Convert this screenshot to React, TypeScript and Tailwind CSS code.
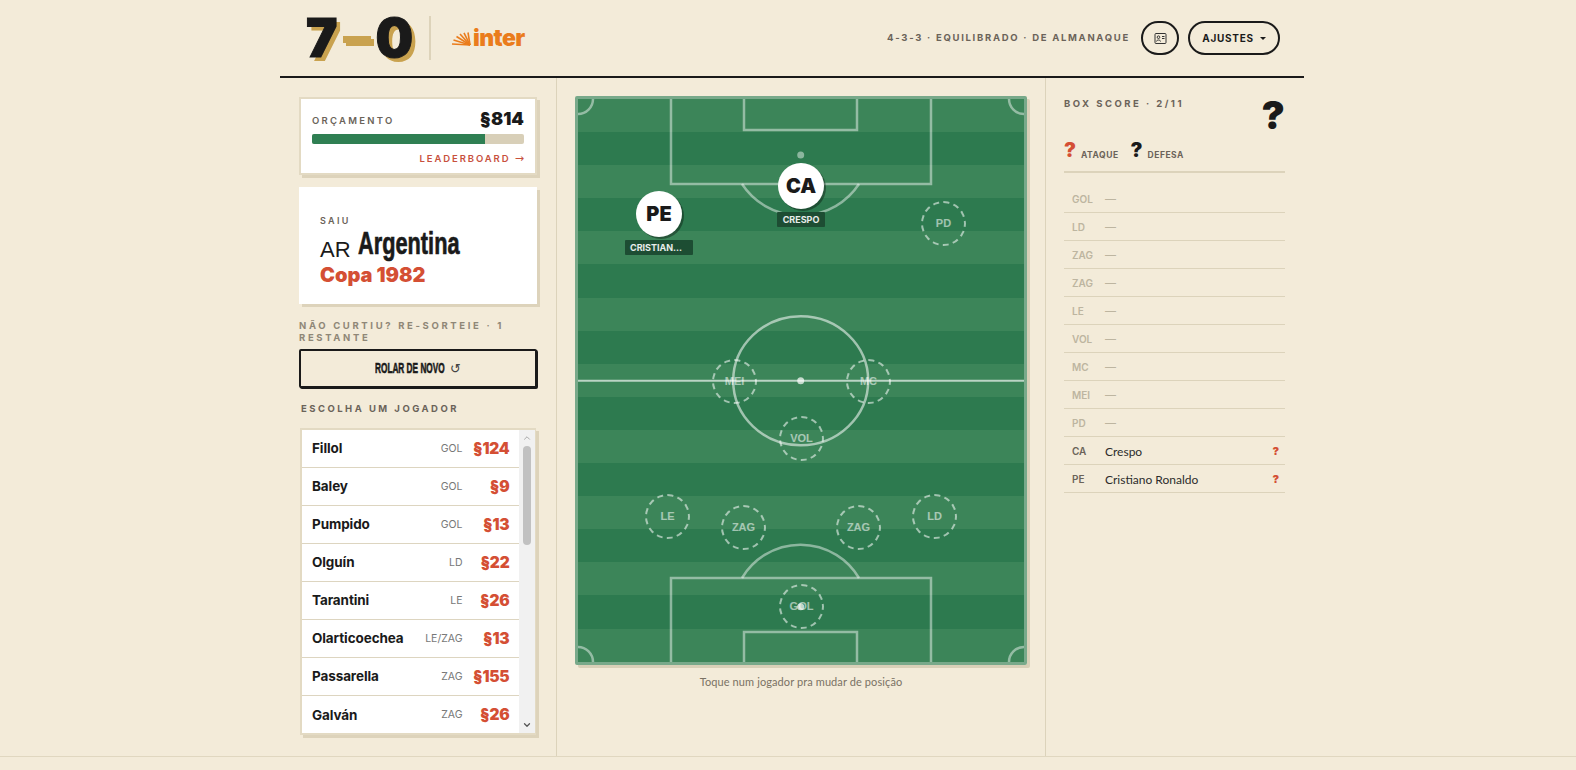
import { ChevronDown, ChevronUp } from "lucide-react";

const players = [
  { name: "Fillol", pos: "GOL", price: "§124" },
  { name: "Baley", pos: "GOL", price: "§9" },
  { name: "Pumpido", pos: "GOL", price: "§13" },
  { name: "Olguín", pos: "LD", price: "§22" },
  { name: "Tarantini", pos: "LE", price: "§26" },
  { name: "Olarticoechea", pos: "LE/ZAG", price: "§13" },
  { name: "Passarella", pos: "ZAG", price: "§155" },
  { name: "Galván", pos: "ZAG", price: "§26" },
];

const boxScore = [
  { pos: "GOL" },
  { pos: "LD" },
  { pos: "ZAG" },
  { pos: "ZAG" },
  { pos: "LE" },
  { pos: "VOL" },
  { pos: "MC" },
  { pos: "MEI" },
  { pos: "PD" },
  { pos: "CA", name: "Crespo" },
  { pos: "PE", name: "Cristiano Ronaldo" },
];

// spot positions in px from the pitch's inner corner
const emptySlots = [
  { pos: "PD", x: 365, y: 124 },
  { pos: "MEI", x: 156, y: 282 },
  { pos: "MC", x: 290, y: 282 },
  { pos: "VOL", x: 223, y: 339 },
  { pos: "LE", x: 89, y: 417 },
  { pos: "ZAG", x: 165, y: 428 },
  { pos: "ZAG", x: 280, y: 428 },
  { pos: "LD", x: 356, y: 417 },
  { pos: "GOL", x: 223, y: 507 },
];

const placed = [
  { pos: "CA", label: "CRESPO", x: 223, y: 87, labelW: "w-[48px]", justify: "justify-center" },
  { pos: "PE", label: "CRISTIAN...", x: 81, y: 115, labelW: "w-[68px]", justify: "justify-start pl-[5px]" },
];

const sunRays = [
  "M19 13L1 12",
  "M19 13L2.5 8",
  "M19 13L5.5 4.5",
  "M19 13L9 2",
  "M19 13L13 .8",
  "M19 13L17 .5",
];

function PitchLines() {
  const line = { stroke: "rgba(255,255,255,0.45)", strokeWidth: 2.5, fill: "none" };
  return (
    <svg viewBox="0 0 446 563" className="absolute inset-0 w-full h-full">
      <path d="M93 0V85H353V0" {...line} />
      <path d="M166 0V31H279V0" {...line} />
      <path d="M164 85A70 70 0 0 0 281 85" {...line} />
      <circle cx="222.7" cy="56" r="3.5" fill="rgba(255,255,255,0.45)" />
      <line x1="0" y1="281.7" x2="446" y2="281.7" stroke="rgba(255,255,255,0.65)" strokeWidth="2" />
      <ellipse cx="222.7" cy="281.7" rx="67.5" ry="64.5" {...line} stroke="rgba(255,255,255,0.55)" />
      <circle cx="222.7" cy="281.7" r="3.5" fill="rgba(255,255,255,0.7)" />
      <path d="M93 563V479H353V563" {...line} />
      <path d="M166 563V533H279V563" {...line} />
      <path d="M164 479A68 68 0 0 1 281 479" {...line} />
      <circle cx="222.7" cy="507.7" r="3.5" fill="rgba(255,255,255,0.7)" />
      <path d="M0 15A15 15 0 0 0 15 0" {...line} />
      <path d="M431 0A15 15 0 0 0 446 15" {...line} />
      <path d="M0 548A15 15 0 0 1 15 563" {...line} />
      <path d="M431 563A15 15 0 0 1 446 548" {...line} />
    </svg>
  );
}

function Pitch() {
  return (
    <div className="relative w-[452px] h-[569px] border-[3px] border-[#78a98a] rounded-[2px] shadow-[3px_3px_0_#d9d0b8] bg-[repeating-linear-gradient(180deg,#3c8559_0,#3c8559_33.1px,#2d7a4f_33.1px,#2d7a4f_66.2px)]">
      <PitchLines />
      {emptySlots.map((s) => (
        <div
          key={s.pos + s.x}
          className="absolute w-[45px] h-[45px] -ml-[22px] -mt-[22px] rounded-full border-[2.5px] border-dashed border-white/55 flex items-center justify-center text-[11px] font-bold text-white/55 font-['Liberation_Sans',sans-serif]"
          style={{ left: s.x, top: s.y }}
        >
          {s.pos}
        </div>
      ))}
      {placed.map((p) => (
        <div key={p.pos} className="absolute w-0 h-0" style={{ left: p.x, top: p.y }}>
          <div className="absolute -left-[23px] -top-[23px] w-[46px] h-[46px] rounded-full bg-white shadow-[2px_2px_0_rgba(0,0,0,0.35)] flex items-center justify-center text-[20px] font-black text-[#1a1a1a] font-['Inter',sans-serif]">
            {p.pos}
          </div>
          <div
            className={`absolute left-0 top-[26px] h-[15px] -translate-x-1/2 flex items-center bg-[#1d4d33] rounded-[1px] text-[9px] font-bold text-white/90 font-['Inter',sans-serif] whitespace-nowrap ${p.labelW} ${p.justify}`}
          >
            {p.label}
          </div>
        </div>
      ))}
    </div>
  );
}

function Header() {
  return (
    <header className="h-[78px] border-b-2 border-[#1a1a1a] pl-[26px] pr-[24px] flex items-center justify-between">
      <div className="flex items-center">
        <div className="flex items-center h-[44px] w-[124px] text-[53px] leading-none font-black text-[#1a1a1a] font-['Inter',sans-serif] [-webkit-text-stroke:1px_#1a1a1a] [text-shadow:4px_4px_0_#c9a24f]">
          <span>7</span>
          <span className="mx-[5px] mt-[3px] w-[28px] h-[7px] bg-[#c9a24f] shadow-[3px_3px_0_#c9a24f]" />
          <span>0</span>
        </div>
        <div className="ml-[-1px] w-[2px] h-[44px] bg-[#ddd3ba]" />
        <div className="ml-[20px] flex items-center gap-[2px]">
          <svg viewBox="0 0 20 14" className="w-[20px] h-[14px] mt-[1px]" stroke="#ea7c1c" strokeWidth="1.6" fill="none">
            {sunRays.map((d) => (
              <path key={d} d={d} />
            ))}
          </svg>
          <span className="text-[23px] leading-none font-black tracking-[-0.6px] text-[#ea7c1c] font-['Inter',sans-serif]">
            inter
          </span>
        </div>
      </div>
      <div className="flex items-center">
        <span className="text-[9.5px] font-bold tracking-[0.18em] text-[#6b6359] font-['Inter',sans-serif] whitespace-nowrap">
          4-3-3 · EQUILIBRADO · DE ALMANAQUE
        </span>
        <button className="ml-[11px] w-[38px] h-[34px] rounded-full border-2 border-[#1a1a1a] flex items-center justify-center">
          <svg viewBox="0 0 13 11" className="w-[13px] h-[11px]" fill="none" stroke="#333" strokeWidth="1">
            <rect x="1" y=".5" width="11" height="10" rx="1" />
            <circle cx="4.5" cy="4.2" r="1.3" />
            <path d="M2.5 8.5c0-2 4-2 4 0" />
            <path d="M8 3.5h2.5M8 5.5h2.5" />
          </svg>
        </button>
        <button className="ml-[9px] w-[92px] h-[34px] rounded-full border-2 border-[#1a1a1a] flex items-center justify-center gap-[6px] text-[10px] font-bold tracking-[0.7px] text-[#1a1a1a] font-['Inter',sans-serif]">
          AJUSTES
          <span className="w-0 h-0 border-x-[3px] border-x-transparent border-t-[3px] border-t-[#1a1a1a]" />
        </button>
      </div>
    </header>
  );
}

function LeftColumn() {
  return (
    <aside className="border-r border-[#dcd3bb] px-[19px] pt-[19px] font-['Inter',sans-serif]">
      <div className="h-[78px] border-2 border-[#e3dac3] bg-white shadow-[3px_3px_0_#ddd3bb] px-[11px] pt-[10px]">
        <div className="flex items-center justify-between h-[20px]">
          <span className="mt-[4px] text-[9.5px] font-semibold tracking-[0.24em] text-[#6b6359]">ORÇAMENTO</span>
          <span className="text-[18px] leading-none font-black text-[#1a1a1a]">§814</span>
        </div>
        <div className="mt-[5px] h-[10px] rounded-[2px] bg-[#d8cfb8]">
          <div className="h-full w-[81.5%] rounded-l-[2px] bg-[#2f7f53]" />
        </div>
        <div className="mt-[8px] text-right text-[9.5px] leading-[14px] font-semibold tracking-[0.2em] text-[#c8503c]">
          LEADERBOARD <span className="text-[11px] font-normal font-['DejaVu_Sans',sans-serif] tracking-normal">→</span>
        </div>
      </div>

      <div className="mt-[12px] h-[117px] bg-white shadow-[3px_3px_0_#ddd3bb] px-[21px] pt-[28px]">
        <div className="text-[9px] leading-[12px] font-semibold tracking-[0.26em] text-[#6b6359]">SAIU</div>
        <div className="mt-[2px] flex items-baseline h-[34px]">
          <span className="text-[22px] leading-[34px] text-[#1a1a1a] font-['Liberation_Sans',sans-serif]">AR</span>
          <span className="ml-[7px] inline-block origin-left -translate-y-[3px] scale-x-[0.68] text-[32px] leading-[34px] font-bold text-[#1a1a1a] font-['Liberation_Sans',sans-serif] [-webkit-text-stroke:0.7px_#1a1a1a]">
            Argentina
          </span>
        </div>
        <div className="text-[20px] leading-[24px] font-black text-[#d44f34]">Copa 1982</div>
      </div>

      <p className="mt-[16px] text-[9.5px] leading-[12px] font-bold tracking-[0.28em] text-[#8f8777]">
        NÃO CURTIU? RE-SORTEIE · 1 RESTANTE
      </p>
      <button className="mt-[5px] w-full h-[39px] rounded-[2px] border-2 border-[#1a1a1a] bg-[#f3ebd9] shadow-[1px_1px_0_#1a1a1a] flex items-center justify-center text-[#1a1a1a]">
        <span className="w-[71px] whitespace-nowrap inline-block text-left origin-left scale-x-[0.55] text-[15px] font-bold font-['Liberation_Sans',sans-serif] [-webkit-text-stroke:0.6px_#1a1a1a]">
          ROLAR DE NOVO
        </span>
        <span className="ml-[4px] text-[13px] leading-none font-normal text-[#444] font-['DejaVu_Sans',sans-serif]">↺</span>
      </button>
      <div className="mt-[15px] ml-[2px] text-[9.5px] leading-[12px] font-bold tracking-[0.26em] text-[#6b6359]">
        ESCOLHA UM JOGADOR
      </div>

      <div className="mt-[13px] ml-[1px] w-[236px] h-[307px] border-y-2 border-l-2 border-r border-[#e3dac3] bg-white shadow-[3px_3px_0_#ddd3bb] flex">
        <ul className="flex-1 min-w-0">
          {players.map((p, i) => (
            <li
              key={p.name}
              className={`h-[38px] pl-[10px] pr-[9.5px] flex items-center ${i < players.length - 1 ? "border-b border-[#ddd5c0]" : ""}`}
            >
              <span className="flex-1 text-[13.5px] font-bold tracking-[-0.1px] text-[#1a1a1a]">{p.name}</span>
              <span className="text-[10.5px] text-[#777]">{p.pos}</span>
              <span className="w-[47px] text-right text-[15.5px] font-black tracking-[-0.2px] text-[#d44f34]">{p.price}</span>
            </li>
          ))}
        </ul>
        <div className="w-[16px] bg-[#f1f1f1] flex flex-col items-center text-[#9a9a9a]">
          <ChevronUp size={10} className="mt-[3px]" />
          <div className="mt-[3px] w-[8px] h-[99px] rounded-full bg-[#c1c1c1]" />
          <ChevronDown size={10} strokeWidth={3} className="mt-auto mb-[3px] text-[#555]" />
        </div>
      </div>
    </aside>
  );
}

function RightColumn() {
  return (
    <aside className="pl-[18px] pr-[19px] font-['Inter',sans-serif]">
      <div className="h-[50px] flex justify-between">
        <span className="mt-[20px] text-[9.5px] leading-[12px] font-bold tracking-[0.26em] text-[#6b6359]">BOX SCORE · 2/11</span>
        <span className="mt-[17px] text-[39px] leading-[40px] font-black text-[#1a1a1a]">?</span>
      </div>
      <div className="mt-[11px] h-[34px] flex items-end pb-[11px] border-b-2 border-[#dcd3bb]">
        <span className="text-[20px] leading-[20px] font-black text-[#d44f34]">?</span>
        <span className="ml-[5px] text-[8.5px] leading-[10px] font-bold tracking-[0.06em] text-[#6b6359]">ATAQUE</span>
        <span className="ml-[12px] text-[20px] leading-[20px] font-black text-[#1a1a1a]">?</span>
        <span className="ml-[5px] text-[8.5px] leading-[10px] font-bold tracking-[0.06em] text-[#6b6359]">DEFESA</span>
      </div>
      <ul className="mt-[12px]">
        {boxScore.map((r, i) => (
          <li key={i} className="h-[28px] pl-[8px] pr-[6px] pt-[2px] flex items-center border-b border-[#dcd3bb]">
            <span className={`w-[33px] text-[10px] font-semibold ${r.name ? "text-[#6b6359]" : "text-[#bdb5a0]"}`}>{r.pos}</span>
            {r.name ? (
              <>
                <span className="flex-1 text-[12px] text-[#2b2b2b] font-['Lato',sans-serif]">{r.name}</span>
                <span className="text-[11px] font-black text-[#d44f34]">?</span>
              </>
            ) : (
              <span className="text-[11px] text-[#bdb5a0]">—</span>
            )}
          </li>
        ))}
      </ul>
    </aside>
  );
}

export default function App() {
  return (
    <div className="h-[770px] overflow-hidden bg-[#f3ebd9]">
      <div className="h-[757px] border-b border-[#e0d7c0]">
        <div className="ml-[280px] w-[1024px] h-[756px] flex flex-col">
          <Header />
          <main className="flex-1 min-h-0 grid grid-cols-[277px_489px_258px]">
            <LeftColumn />
            <section className="border-r border-[#dcd3bb] pl-[18px] pt-[18px]">
              <Pitch />
              <p className="mt-[9px] w-[452px] text-center text-[11px] tracking-[0.1px] text-[#7a7264] font-['Lato',sans-serif]">
                Toque num jogador pra mudar de posição
              </p>
            </section>
            <RightColumn />
          </main>
        </div>
      </div>
    </div>
  );
}
